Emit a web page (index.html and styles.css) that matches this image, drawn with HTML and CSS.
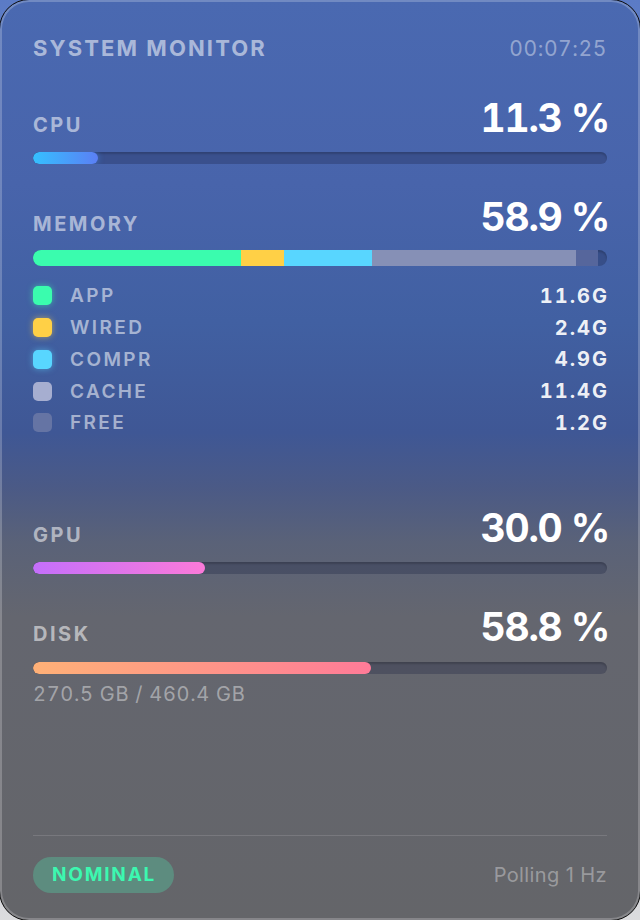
FILE: index.html
```html
<!DOCTYPE html>
<html lang="en">
<head>
<meta charset="utf-8">
<title>System Monitor</title>
<link rel="stylesheet" href="styles.css">
</head>
<body>
<div class="panel">
  <header class="head">
    <span class="title">SYSTEM MONITOR</span>
    <span class="clock">00:07:25</span>
  </header>

  <section class="metric">
    <div class="row"><span class="label">CPU</span><span class="value">11.3 %</span></div>
    <div class="track"><div class="fill fill-cpu" style="width:11.3%"></div></div>
  </section>

  <section class="metric">
    <div class="row"><span class="label">MEMORY</span><span class="value">58.9 %</span></div>
    <div class="track track-mem">
      <div class="seg seg-app" style="width:36.25%"></div>
      <div class="seg seg-wired" style="width:7.5%"></div>
      <div class="seg seg-compr" style="width:15.3%"></div>
      <div class="seg seg-cache" style="width:35.6%"></div>
      <div class="seg seg-free" style="width:3.75%"></div>
    </div>
    <ul class="legend">
      <li><span class="sw sw-app"></span><span class="lg-name">APP</span><span class="lg-val">11.6G</span></li>
      <li><span class="sw sw-wired"></span><span class="lg-name">WIRED</span><span class="lg-val">2.4G</span></li>
      <li><span class="sw sw-compr"></span><span class="lg-name">COMPR</span><span class="lg-val">4.9G</span></li>
      <li><span class="sw sw-cache"></span><span class="lg-name">CACHE</span><span class="lg-val">11.4G</span></li>
      <li><span class="sw sw-free"></span><span class="lg-name">FREE</span><span class="lg-val">1.2G</span></li>
    </ul>
  </section>

  <section class="metric metric-gpu">
    <div class="row"><span class="label">GPU</span><span class="value">30.0 %</span></div>
    <div class="track"><div class="fill fill-gpu" style="width:30%"></div></div>
  </section>

  <section class="metric">
    <div class="row"><span class="label">DISK</span><span class="value">58.8 %</span></div>
    <div class="track track-disk"><div class="fill fill-disk" style="width:58.8%"></div></div>
    <div class="sub">270.5 GB / 460.4 GB</div>
  </section>

  <footer class="foot">
    <span class="pill">NOMINAL</span>
    <span class="poll">Polling 1 Hz</span>
  </footer>
</div>
</body>
</html>
```

FILE: styles.css
```css
* { box-sizing: border-box; }

html, body {
  margin: 0;
  padding: 0;
  width: 640px;
  height: 920px;
  overflow: hidden;
}

body {
  background: linear-gradient(180deg, #5b7bc6 0%, #8a9bc8 50%, #dcdcde 100%);
  font-family: Inter, "Noto Sans", "Liberation Sans", sans-serif;
  color: #fff;
}

.panel {
  margin: -1px;
  width: 642px;
  height: 922px;
  border: 1px solid #111;
  border-radius: 30px;
  background: linear-gradient(180deg,
    #4a69b1 0%,
    #4864ab 20%,
    #4160a2 35%,
    #3f5795 47%,
    #4b5a86 53%,
    #5a6278 59%,
    #64666f 67%,
    #646569 100%);
  box-shadow: inset 0 0 0 2px rgba(255, 255, 255, 0.22);
  padding: 34px 33px 27px 33px;
  display: flex;
  flex-direction: column;
}

.head {
  display: flex;
  justify-content: space-between;
  align-items: baseline;
  height: 28px;
  line-height: 28px;
}

.title {
  font-size: 22px;
  font-weight: 700;
  letter-spacing: 2.1px;
  color: rgba(255, 255, 255, 0.55);
}

.clock {
  font-size: 21px;
  font-weight: 400;
  letter-spacing: 0.6px;
  font-variant-numeric: tabular-nums;
  color: rgba(255, 255, 255, 0.42);
}

.metric { margin-top: 29px; }
.head + .metric { margin-top: 32px; }
.metric-gpu { margin-top: 65px; }

.row {
  display: flex;
  justify-content: space-between;
  align-items: baseline;
  height: 48px;
  line-height: 48px;
}

.label {
  font-size: 20px;
  font-weight: 700;
  letter-spacing: 2.5px;
  color: rgba(255, 255, 255, 0.55);
}

.value {
  margin-right: -2px;
  font-size: 39px;
  font-weight: 700;
  letter-spacing: -1.3px;
  font-variant-numeric: tabular-nums;
  color: #fff;
}

.track {
  margin-top: 10px;
  height: 12px;
  border-radius: 6px;
  background: rgba(20, 30, 60, 0.28);
  box-shadow: inset 0 2px 2px rgba(0, 0, 0, 0.18);
  overflow: hidden;
  display: flex;
}

.track-mem {
  margin-top: 9px;
  height: 16px;
  border-radius: 8px;
}

.track-disk { margin-top: 11px; }

.fill {
  height: 100%;
  border-radius: 6px;
}

.fill-cpu { background: linear-gradient(90deg, #35c0ff, #5b7ff5); box-shadow: 0 0 6px rgba(70, 160, 255, 0.5); }
.fill-gpu { background: linear-gradient(90deg, #c46ffb, #fb7ad9); }
.fill-disk { background: linear-gradient(90deg, #ffb177, #ff7b98); }

.seg { height: 100%; }
.seg-app { background: #3afcae; }
.seg-wired { background: #ffd046; }
.seg-compr { background: #58d6ff; }
.seg-cache { background: #8690b6; }
.seg-free { background: #56669c; }

.legend {
  list-style: none;
  margin: 14px 0 0 0;
  padding: 0;
}

.legend li {
  display: flex;
  align-items: center;
  height: 31.75px;
}

.sw {
  width: 19px;
  height: 19px;
  border-radius: 5px;
  flex: none;
}

.sw-app { background: #3afcae; box-shadow: 0 0 6px rgba(58, 252, 174, 0.55); }
.sw-wired { background: #ffd046; box-shadow: 0 0 6px rgba(255, 208, 70, 0.55); }
.sw-compr { background: #58d6ff; box-shadow: 0 0 6px rgba(88, 214, 255, 0.55); }
.sw-cache { background: #a6aed0; }
.sw-free { background: #6574a4; }

.lg-name {
  margin-left: 18px;
  font-size: 19px;
  font-weight: 600;
  letter-spacing: 2.4px;
  color: rgba(255, 255, 255, 0.55);
}

.lg-val {
  margin-left: auto;
  margin-right: -2px;
  font-size: 20px;
  font-weight: 700;
  letter-spacing: 2px;
  font-variant-numeric: tabular-nums;
  color: rgba(255, 255, 255, 0.92);
}

.sub {
  margin-top: 8px;
  font-size: 20px;
  line-height: 24px;
  letter-spacing: 0.7px;
  font-variant-numeric: tabular-nums;
  color: rgba(255, 255, 255, 0.42);
}

.foot {
  margin-top: auto;
  border-top: 1px solid rgba(255, 255, 255, 0.13);
  padding-top: 21px;
  display: flex;
  justify-content: space-between;
  align-items: center;
}

.pill {
  height: 36px;
  line-height: 36px;
  padding: 0 18px 0 19px;
  border-radius: 18px;
  background: #5d8c7f;
  color: #3cf8b0;
  font-size: 19px;
  font-weight: 700;
  letter-spacing: 1.8px;
}

.poll {
  font-size: 20px;
  letter-spacing: 0.4px;
  color: rgba(255, 255, 255, 0.36);
}
```
